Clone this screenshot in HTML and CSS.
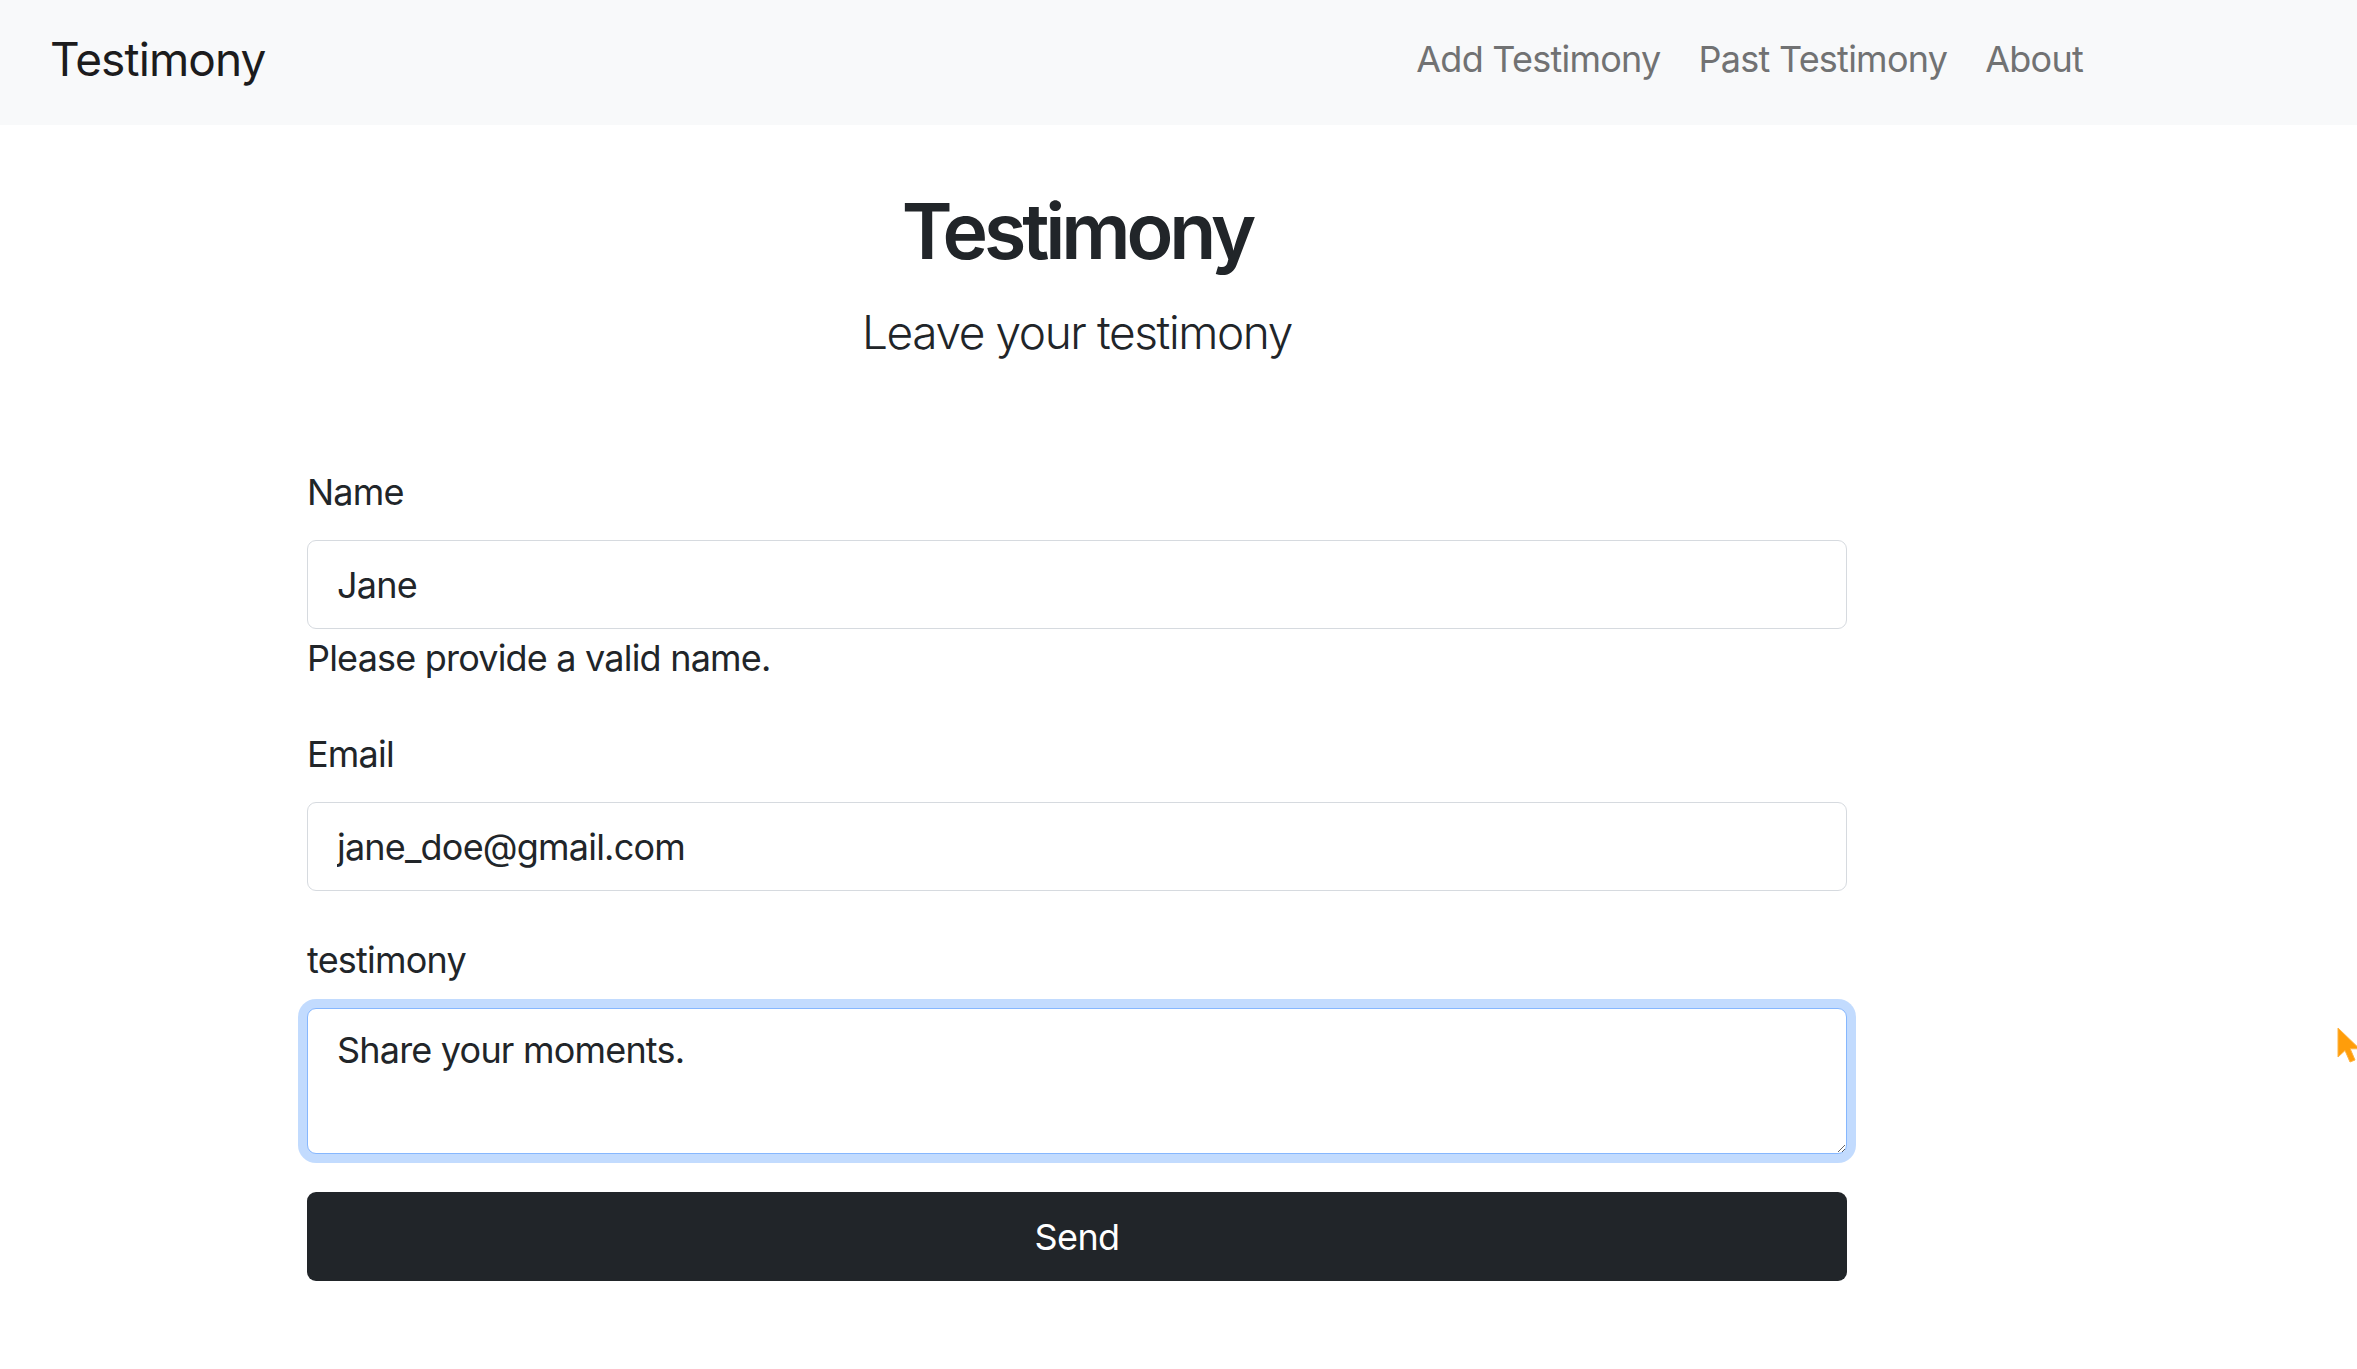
FILE: index.html
```html
<!DOCTYPE html>
<html lang="en">
<head>
<meta charset="utf-8">
<title>Testimony</title>
<link rel="stylesheet" href="styles.css">
</head>
<body>
<nav class="navbar">
  <a class="brand" href="#">Testimony</a>
  <ul class="nav">
    <li><a class="nav-link" href="#">Add Testimony</a></li>
    <li><a class="nav-link" href="#">Past Testimony</a></li>
    <li><a class="nav-link" href="#">About</a></li>
  </ul>
</nav>
<main class="container">
  <header class="hero">
    <h1 class="title">Testimony</h1>
    <p class="lead">Leave your testimony</p>
  </header>
  <form class="form">
    <div class="group">
      <label class="label" for="name">Name</label>
      <input class="control" id="name" type="text" value="Jane">
      <div class="feedback">Please provide a valid name.</div>
    </div>
    <div class="group">
      <label class="label" for="email">Email</label>
      <input class="control" id="email" type="email" value="jane_doe@gmail.com">
    </div>
    <div class="group group-last">
      <label class="label" for="testimony">testimony</label>
      <textarea class="control area focused" id="testimony" rows="2">Share your moments.</textarea>
    </div>
    <button class="send" type="button">Send</button>
  </form>
</main>
<svg class="cursor" width="30" height="44" viewBox="0 0 30 44" aria-hidden="true">
  <path d="M1 1 L1 30 L8 23.5 L13 35 L18 33 L13.2 21.8 L22.5 21.8 Z" fill="#ff9d0a" stroke="#ffb340" stroke-width="1" stroke-linejoin="round"/>
</svg>
</body>
</html>
```

FILE: styles.css
```css
* { box-sizing: border-box; }

html, body {
  margin: 0;
  padding: 0;
}

body {
  font-family: Inter, "Noto Sans", "Liberation Sans", sans-serif;
  color: #212529;
  background: #ffffff;
  overflow: hidden;
  width: 2357px;
  height: 1369px;
}

.navbar {
  height: 125px;
  background: #f8f9fa;
  display: flex;
  align-items: center;
  padding: 0 255px 7px 50px;
}

.brand {
  font-size: 46px;
  line-height: 1.5;
  color: #1c1c1d;
  text-decoration: none;
  letter-spacing: -0.9px;
}

.nav {
  list-style: none;
  margin: 0 0 0 auto;
  padding: 0;
  display: flex;
}

.nav-link {
  display: block;
  padding: 19px 19px;
  font-size: 36px;
  line-height: 1.5;
  color: #717273;
  text-decoration: none;
  letter-spacing: -0.75px;
}

.container {
  width: 1540px;
  margin-left: 307px;
}

.hero {
  text-align: center;
  padding-top: 60px;
}

.title {
  margin: 0;
  font-size: 77px;
  font-weight: 600;
  line-height: 1.2;
  letter-spacing: -4.1px;
}

.lead {
  margin: 21px 0 0;
  font-size: 46px;
  font-weight: 300;
  line-height: 1.5;
  letter-spacing: -1.4px;
}

.form {
  margin-top: 98px;
  display: flex;
  flex-direction: column;
}

.group {
  margin-bottom: 42px;
  display: flex;
  flex-direction: column;
}

.group-last {
  margin-bottom: 38px;
}

.label {
  font-size: 36px;
  line-height: 1.5;
  margin-bottom: 21px;
  letter-spacing: -0.8px;
}

.control {
  display: block;
  width: 100%;
  height: 89px;
  padding: 14px 29px;
  font-family: Inter, "Noto Sans", "Liberation Sans", sans-serif;
  font-size: 36px;
  line-height: 1.5;
  color: #212529;
  background: #ffffff;
  border: 1.5px solid #d6dadf;
  border-radius: 9px;
  outline: none;
  letter-spacing: -0.8px;
}

.area {
  height: 146px;
  resize: vertical;
}

.focused {
  border-color: #86b7fe;
  box-shadow: 0 0 0 9px rgba(13, 110, 253, 0.25);
}

.feedback {
  margin-top: 2px;
  font-size: 36px;
  line-height: 1.5;
  letter-spacing: -0.8px;
}

.send {
  display: block;
  width: 100%;
  height: 89px;
  border: none;
  border-radius: 9px;
  background: #212529;
  color: #ffffff;
  font-family: Inter, "Noto Sans", "Liberation Sans", sans-serif;
  font-size: 36px;
  line-height: 1.5;
  letter-spacing: -0.6px;
}

.cursor {
  position: absolute;
  left: 2337px;
  top: 1027px;
}
```
